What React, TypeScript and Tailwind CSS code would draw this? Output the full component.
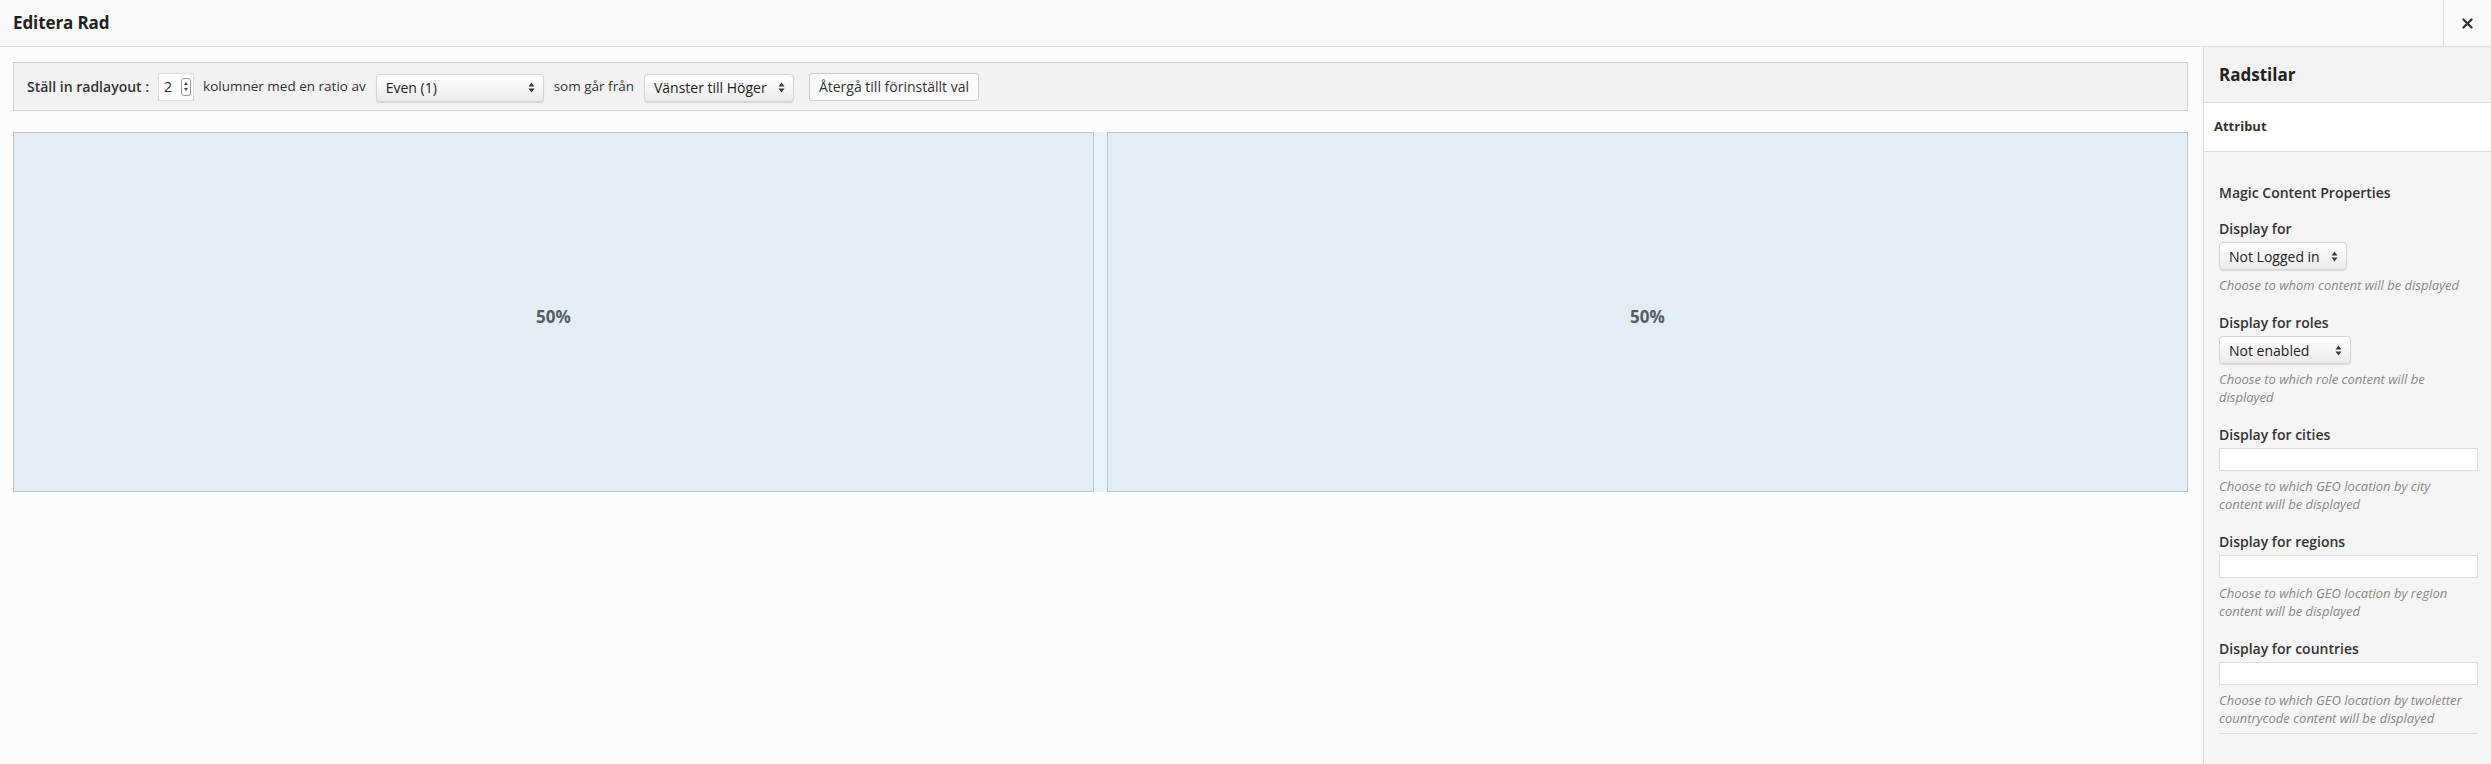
import React from "react";

function UpDown({ className = "" }: { className?: string }) {
  return (
    <svg width="7" height="11" viewBox="0 0 7 11" className={className}>
      <path d="M3.5 0.5 L6.5 4.5 L0.5 4.5 Z" fill="#3a3a3a" />
      <path d="M3.5 10.5 L6.5 6.5 L0.5 6.5 Z" fill="#3a3a3a" />
    </svg>
  );
}

function MacSelect({ value, width, textSize = "text-[14px]" }: { value: string; width: string; textSize?: string }) {
  return (
    <div
      className={`${width} h-[28px] flex items-center justify-between pl-[9px] pr-[8px] rounded-[4px] border border-[#d4d4d4] bg-gradient-to-b from-white to-[#ebebeb] shadow-[0_1px_1px_rgba(0,0,0,0.12)] ${textSize} text-[#222]`}
    >
      <span className="whitespace-nowrap">{value}</span>
      <UpDown />
    </div>
  );
}

function NumberInput() {
  return (
    <div className="w-[36px] h-[28px] bg-white border border-[#dcdcdc] flex items-center pl-[5px] pr-[2px] justify-between">
      <span className="text-[14px] text-[#222]">2</span>
      <div className="w-[10px] h-[18px] rounded-[3px] border border-[#9a9a9a] flex flex-col items-center justify-center gap-[3px]">
        <svg width="4" height="3" viewBox="0 0 4 3">
          <path d="M2 0 L4 3 L0 3 Z" fill="#444" />
        </svg>
        <svg width="4" height="3" viewBox="0 0 4 3">
          <path d="M2 3 L4 0 L0 0 Z" fill="#444" />
        </svg>
      </div>
    </div>
  );
}

function Column({ label }: { label: string }) {
  return (
    <div className="flex-1 h-full bg-[#e2eef4] border border-[#bac9d1] flex items-center justify-center">
      <span className="text-[17px] font-bold text-[#555d64] mt-[9px]">{label}</span>
    </div>
  );
}

function Field({
  label,
  help,
  control,
  first = false,
}: {
  label: string;
  help: string;
  control: React.ReactNode;
  first?: boolean;
}) {
  return (
    <div className={first ? "mt-[16px]" : "mt-[19px]"}>
      <div className="text-[14px] font-semibold leading-5 text-[#333]">{label}</div>
      <div className="mt-[3px]">{control}</div>
      <p className="mt-[6px] text-[13px] italic leading-[18px] text-[#888] pr-[2px]">{help}</p>
    </div>
  );
}

function TextInput() {
  return <div className="h-[23px] w-full bg-white border border-[#dddddd]" />;
}

export default function App() {
  return (
    <div className="w-[2491px] h-[764px] flex flex-col bg-[#fcfcfc] font-['Open_Sans',sans-serif] text-[#333] overflow-hidden">
      {/* Header */}
      <div className="h-[47px] flex border-b border-[#dddddd] bg-[#f9f9f9] shrink-0">
        <div className="flex-1 flex items-center pl-[13px]">
          <h1 className="text-[17px] font-bold text-[#222] tracking-[-0.1px]">Editera Rad</h1>
        </div>
        <button className="w-[48px] border-l border-[#dddddd] flex items-center justify-center text-[#333]">
          <svg width="11" height="11" viewBox="0 0 11 11">
            <path d="M1.5 1.5 L9.5 9.5 M9.5 1.5 L1.5 9.5" stroke="#333" strokeWidth="2.4" strokeLinecap="round" />
          </svg>
        </button>
      </div>

      <div className="flex-1 flex min-h-0">
        {/* Main */}
        <div className="flex-1 pl-[13px] pr-[15px] pt-[15px]">
          <div className="h-[49px] bg-[#f2f2f2] border border-[#cfcfcf] flex items-center pl-[13px] text-[13.5px] text-[#333]">
            <span className="text-[14px] font-semibold whitespace-nowrap">Ställ in radlayout :</span>
            <div className="ml-[9px]">
              <NumberInput />
            </div>
            <span className="ml-[9px] whitespace-nowrap">kolumner med en ratio av</span>
            <div className="ml-[10px] mt-[2px]">
              <MacSelect value="Even (1)" width="w-[168px]" />
            </div>
            <span className="ml-[10px] whitespace-nowrap">som går från</span>
            <div className="ml-[10px] mt-[2px]">
              <MacSelect value="Vänster till Höger" width="w-[150px]" />
            </div>
            <button className="ml-[15px] h-[28px] w-[170px] bg-[#fafafa] border border-[#cccccc] rounded-[3px] text-[14px] text-[#333] whitespace-nowrap">
              Återgå till förinställt val
            </button>
          </div>

          <div className="mt-[21px] h-[360px] flex">
            <Column label="50%" />
            <div className="w-[13px] h-full bg-[#e5f4fb]" />
            <Column label="50%" />
          </div>
        </div>

        {/* Sidebar */}
        <aside className="w-[288px] shrink-0 border-l border-[#dddddd] bg-[#f5f5f5] flex flex-col">
          <div className="h-[56px] border-b border-[#dddddd] bg-[#f3f3f3] flex items-center pl-[15px]">
            <h2 className="text-[17px] font-bold text-[#222]">Radstilar</h2>
          </div>
          <div className="h-[49px] border-b border-[#dddddd] bg-white flex items-center pl-[10px]">
            <span className="text-[13px] font-bold text-[#333]">Attribut</span>
          </div>

          <div className="pl-[15px] pr-[13px] pt-[31px]">
            <div className="text-[14px] font-semibold leading-5 text-[#333]">Magic Content Properties</div>

            <Field
              first
              label="Display for"
              help="Choose to whom content will be displayed"
              control={<MacSelect value="Not Logged in" width="w-[128px]" />}
            />
            <Field
              label="Display for roles"
              help="Choose to which role content will be displayed"
              control={<MacSelect value="Not enabled" width="w-[132px]" />}
            />
            <Field
              label="Display for cities"
              help="Choose to which GEO location by city content will be displayed"
              control={<TextInput />}
            />
            <Field
              label="Display for regions"
              help="Choose to which GEO location by region content will be displayed"
              control={<TextInput />}
            />
            <Field
              label="Display for countries"
              help="Choose to which GEO location by twoletter countrycode content will be displayed"
              control={<TextInput />}
            />
            <div className="mt-[6px] h-px bg-[#dddddd]" />
          </div>
        </aside>
      </div>
    </div>
  );
}
